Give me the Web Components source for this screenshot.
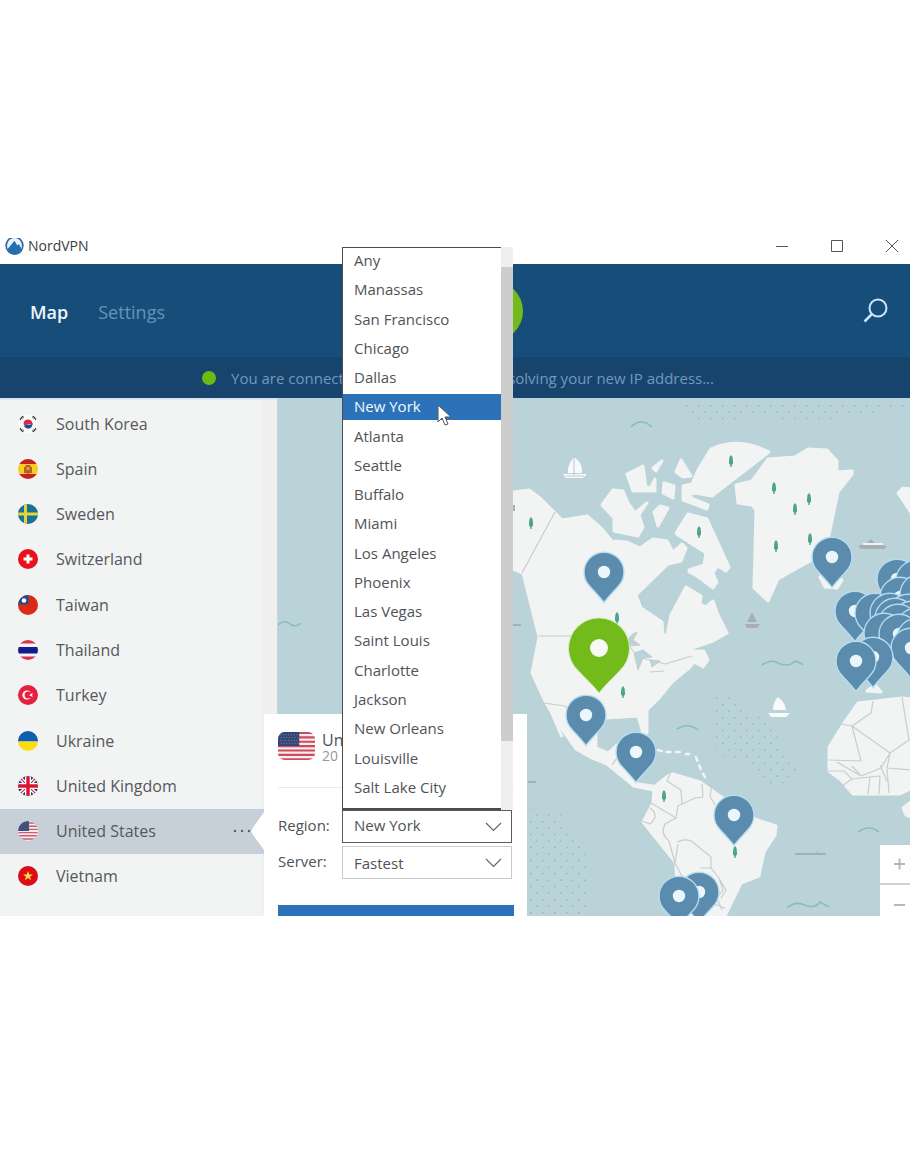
<!DOCTYPE html>
<html lang="en">
<head>
<meta charset="utf-8">
<meta name="viewport" content="width=device-width, initial-scale=1">
<title>NordVPN</title>
<style>
  body { margin: 0; padding-top: 238px; background: #fff; color: #505357; font: 16px/24px "Open Sans", "Noto Sans", sans-serif; }
</style>
</head>
<body>
<vpn-window>
  <title-bar slot="title">NordVPN</title-bar>
  <app-header slot="header"></app-header>
  <status-bar slot="status"><span>You are connect</span><span slot="next">solving your new IP address...</span></status-bar>
  <country-list slot="side">
    <country-item flag="kr">South Korea</country-item>
    <country-item flag="es">Spain</country-item>
    <country-item flag="se">Sweden</country-item>
    <country-item flag="ch">Switzerland</country-item>
    <country-item flag="tw">Taiwan</country-item>
    <country-item flag="th">Thailand</country-item>
    <country-item flag="tr">Turkey</country-item>
    <country-item flag="ua">Ukraine</country-item>
    <country-item flag="gb">United Kingdom</country-item>
    <country-item flag="us" selected>United States</country-item>
    <country-item flag="vn">Vietnam</country-item>
  </country-list>
  <world-map slot="map"></world-map>
  <server-card slot="card"></server-card>
</vpn-window>

<script>
function define(name, html, setup) {
  const template = document.createElement('template');
  template.innerHTML = html;
  customElements.define(name, class extends HTMLElement {
    constructor() {
      super();
      this.attachShadow({ mode: 'open' }).append(template.content.cloneNode(true));
    }
    connectedCallback() { if (setup) setup(this, this.shadowRoot); }
  });
}

/* The window's visible part ends with the map; the card runs on below it. */
define('vpn-window', `
<style>
  :host { display: block; position: relative; overflow: hidden; background: #fff; }
  .body { position: relative; display: grid; grid-template-columns: 278px 1fr; min-height: 518px; }
  .card { position: absolute; left: 264px; top: 316px; width: 263px; }
</style>
<slot name="title"></slot>
<slot name="header"></slot>
<slot name="status"></slot>
<div class="body">
  <slot name="side"></slot>
  <slot name="map"></slot>
  <div class="card"><slot name="card"></slot></div>
</div>`);

define('title-bar', `
<style>
  :host { display: flex; align-items: center; height: 26px; padding: 0 11px 10px 5px; font-size: 14px; line-height: 18px; color: #3c3c3c; box-sizing: border-box; }
  .logo { width: 19px; height: 20px; margin-right: 4px; }
  .name { flex: 1; }
  .tools { display: flex; gap: 40px; }
  button { border: 0; padding: 0; background: none; display: block; width: 15px; height: 15px; }
  svg { display: block; }
</style>
<svg class="logo" viewBox="0 0 19 20"><circle cx="9.500" cy="9.500" r="9.200" fill="#356ba6"/><path d="M2.500 13C1 7 4 2 9.500 2S18 7 16.500 13l-3-5-1.500 2-2.500-5z" fill="#e8f2fb"/><path d="M2.500 15 9.500 5l3 5 1.500-1.500 3 6C15 20 5 20 2.500 15z" fill="#246fb3"/></svg>
<span class="name"><slot></slot></span>
<div class="tools">
  <button aria-label="Minimize"><svg width="15" height="15" fill="none" stroke="#555"><path d="M2 7.500h12"/></svg></button>
  <button aria-label="Maximize"><svg width="15" height="15" fill="none" stroke="#555"><path d="M2.500 1.500h11v11h-11z"/></svg></button>
  <button aria-label="Close"><svg width="15" height="15" fill="none" stroke="#555"><path d="m2 1 12 12M14 1 2 13"/></svg></button>
</div>`);

define('app-header', `
<style>
  :host { display: grid; grid-template-columns: 1fr auto 1fr; align-items: center; height: 93px; padding: 0 21px 0 30px; background: #174e79; font-size: 18px; line-height: 24px; }
  nav { display: flex; gap: 30px; padding-top: 2px; }
  a { color: #6593ba; text-decoration: none; }
  a[aria-current] { color: #eef6fd; font-weight: 600; }
  .power { width: 134px; height: 60px; border: 0; border-radius: 30px; background: #73ba1b; margin-left: -8px; }
  .search { justify-self: end; border: 0; padding: 0; background: none; width: 26px; height: 28px; }
  svg { display: block; }
</style>
<nav><a href="#map" aria-current="page">Map</a><a href="#settings">Settings</a></nav>
<button class="power" aria-label="Connection"></button>
<button class="search" aria-label="Search"><svg width="26" height="28" fill="none" stroke="#cbe4fb" stroke-width="2"><circle cx="15" cy="11" r="8.500"/><path d="m9 17-7.500 7.500" stroke-width="2.500"/></svg></button>`);

define('status-bar', `
<style>
  :host { display: flex; align-items: center; justify-content: center; gap: 15px; height: 41px; padding-left: 6px; background: #17446d; color: #7299bb; font-size: 15px; line-height: 22px; box-sizing: border-box; }
  .dot { width: 14px; height: 14px; border-radius: 50%; background: #6cbb13; }
  .text { display: flex; justify-content: space-between; width: 483px; padding-top: 1px; }
</style>
<span class="dot"></span>
<span class="text"><slot></slot><slot name="next"></slot></span>`);

define('country-list', `
<style>
  :host { display: flex; flex-direction: column; justify-content: space-between; background: #f2f3f3; border-top: 2px solid #dbe4f0; padding: 1px 0 17px; box-sizing: border-box; box-shadow: inset -14px 0 #efefef; border-right: 1px solid #c9d3d8; }
</style><slot></slot>`);

define('country-item', `
<style>
  :host { display: block; width: 264px; }
  a { position: relative; display: flex; align-items: center; height: 45px; padding: 0 13px 0 18px; gap: 18px; color: #55585b; text-decoration: none; box-sizing: border-box; }
  .name { flex: 1; }
  .more { display: none; width: 18px; height: 4px; }
  :host([selected]) a { background: #c7d0d9; }
  :host([selected]) .more { display: block; }
  :host([selected]) a::after { content: ""; position: absolute; right: 0; top: 0; width: 13px; height: 45px; background: #fff; clip-path: polygon(100% 8%, 100% 92%, 30% 64%, 0 50%, 30% 36%); }
</style>
<a href="#country"><flag-icon></flag-icon><span class="name"><slot></slot></span>
<svg class="more" viewBox="0 0 18 4" fill="#5b6168"><circle cx="2" cy="2" r="1.200"/><circle cx="9" cy="2" r="1.200"/><circle cx="16" cy="2" r="1.200"/></svg></a>`,
(host, root) => root.querySelector('flag-icon').setAttribute('code', host.getAttribute('flag')));

const usStripes = '<path fill="#f3eef1" d="M0 0h40v30H0z"/><path stroke="#cf4a5c" stroke-width="2.300" d="M0 1h40M0 5.700h40M0 10.400h40M0 15.100h40M0 19.800h40M0 24.500h40M0 29.200h40"/>';
const flags = {
  kr: '<path fill="#fafafa" d="M0 0h20v20H0z"/><path d="M6 7.500A4.800 4.800 0 0 1 14.500 9C13 13 10 8 8 11 6 12 5 10 6 7.500z" fill="#d32b42"/><path d="M5.500 11C7 13 8 9.500 10 10.500S13.500 11 14.500 9C15.500 15 8 17 5.500 11z" fill="#244b98"/><path d="m1.500 5 3.500-3M1.500 15l3.500 3M15 2l3.500 3M15 18l3.500-3" stroke="#333" stroke-width="3" stroke-dasharray="1.300 .4"/>',
  es: '<path fill="#f7ce21" d="M0 0h20v20H0z"/><path fill="#c42127" d="M0 0h20v5H0zm0 15h20v5H0z"/><path fill="#b9602a" d="M6 8h1.500V6h5v2H14v6h-2l-2 1-2-1H6z"/><path d="M8.500 8h3v3h-3z" fill="#dd9a48"/>',
  se: '<path fill="#187298" d="M0 0h20v20H0z"/><path fill="#e7d33a" d="M6 0h3v20H6z"/><path fill="#e7d33a" d="M0 8.500h20v3H0z"/>',
  ch: '<path fill="#ea111c" d="M0 0h20v20H0z"/><path fill="#fff" d="M8.500 5.500h3v3h3v3h-3v3h-3v-3h-3v-3h3z"/>',
  tw: '<path fill="#dd2a17" d="M0 0h20v20H0z"/><path fill="#234a93" d="M0 0h10.500v9.500H0z"/><circle cx="6" cy="5.500" r="2.300" fill="#fff"/>',
  th: '<path fill="#f5f3f5" d="M0 0h20v20H0z"/><path fill="#d53449" d="M0 0h20v3.500H0zm0 16.500h20V20H0z"/><path fill="#131c8e" d="M0 7h20v6.500H0z"/>',
  tr: '<path fill="#e4213f" d="M0 0h20v20H0z"/><circle cx="9" cy="10" r="4.600" fill="#fff"/><circle cx="10.200" cy="10" r="3.600" fill="#e4213f"/><path fill="#fff" d="m11 10 4-2-1 2 1 2z"/>',
  ua: '<path fill="#0d5eae" d="M0 0h20v10.500H0z"/><path fill="#fbdd14" d="M0 10.500h20V20H0z"/>',
  gb: '<path fill="#26337c" d="M0 0h20v20H0z"/><path stroke="#fff" stroke-width="4" d="m0 0 20 20M20 0 0 20"/><path stroke="#d8243c" stroke-width="1.200" d="m0 0 20 20M20 0 0 20"/><path stroke="#fff" stroke-width="6" d="M10 0v20M0 10h20"/><path stroke="#d8142f" stroke-width="3.400" d="M10 0v20M0 10h20"/>',
  us: '<path fill="#f1eef1" d="M0 0h20v20H0z"/><path stroke="#cf5b6b" stroke-width="1.400" d="M0 2h20M0 5.200h20M0 8.400h20M0 11.600h20M0 14.800h20M0 18h20"/><path fill="#43507f" d="M0 0h11v10H0z"/>',
  vn: '<path fill="#dd0d17" d="M0 0h20v20H0z"/><path fill="#fddc3f" d="m10 5 1.300 3.500H15l-3 2.200 1.200 3.600-3.200-2.200-3.200 2.200L8 10.700 5 8.500h3.700z"/>'
};
customElements.define('flag-icon', class extends HTMLElement {
  static observedAttributes = ['code'];
  constructor() { super(); this.attachShadow({ mode: 'open' }); }
  attributeChangedCallback(n, o, code) {
    this.shadowRoot.innerHTML = `<style>:host { display: block; width: 20px; height: 20px; border-radius: 50%; overflow: hidden; } svg { display: block; }</style><svg width="20" height="20" viewBox="0 0 20 20">${flags[code]}</svg>`;
  }
});

/* Pins are listed back to front, as x and y of the head's centre; a third value of 0 leaves the hole out. */
const pins = [[604,572],[586,715],[636,752],[832,557],[734,815],[699,892],[679,896],
  [897,579],[916,580,0],[900,597],[920,594,0],[855,611],[875,613,0],[890,613,0],[908,614,0],[895,618,0],[912,621,0],[898,624,0],[916,628,0],[884,633,0],[899,634],[917,638,0],[911,648],[873,657],[856,661]];
const trees = [[531,523],[731,461],[699,532],[774,488],[809,499],[795,509],[776,546],[810,539],[623,692],[617,618],[664,796],[735,852]];
define('world-map', `
<style>
  :host { display: block; position: relative; background: #bad3d9; }
  svg { position: absolute; inset: 0; width: 100%; height: 100%; display: block; }
  .zoom { position: absolute; right: 0; bottom: 0; width: 30px; display: grid; gap: 2px; background: #ccd2d5; }
  button { border: 0; padding: 0 0 0 8px; height: 38px; background: #fff; color: #b4b8ba; }
  button:last-child { height: 31px; padding-top: 8px; }
  .zoom svg { position: static; width: 22px; height: 24px; }
</style>
<svg viewBox="278 398 632 518" preserveAspectRatio="xMinYMin slice" role="img" aria-label="World map">
  <defs>
    <pattern id="dots" x="0" y="0" width="12" height="13" patternUnits="userSpaceOnUse"><path d="M2 2h1.500v1.200H2zM8 8.500h1.500v1.200H8z" fill="#8db4be"/></pattern>
    <path id="pin" d="M0 30.500C-4 25-9 20-14 14.500A20 20 0 1 1 14 14.500C9 20 4 25 0 30.500Z"/>
    <path id="tree" d="M-1.500-4 0-6 1.500-4 2 0 2 2.500 .7 4V6H-.7V4L-2 2.500V0Z"/>
  </defs>
  <path fill="url(#dots)" d="M682 402H910V410L860 414 840 419H780L760 414 740 420H692ZM712 690 735 700 770 725 800 775 775 788 750 765 717 755ZM528 808 560 814 585 850 590 916H528Z"/>
  <g fill="#f2f3f3" stroke="#f2f3f3" stroke-width="3" stroke-linejoin="round">
    <path d="M500 496 513 492 529 490 540 498 555 513 562 520 587 516 600 527 612 541 627 542 640 548 653 539 667 541 673 552 682 544 686 548 681 561 668 564 636 595 641 608 662 622 663 635H667L671 615 686 587 701 596 700 604 706 607 713 601 718 615 727 633 713 641 695 647 687 651 704 651 708 660 703 667 694 662 689 668 672 682 659 698 647 710V733H643L638 716 606 718 596 730V748L608 753 617 745 626 751 623 768 638 784 653 786 653 790 634 786 607 764 590 757 576 749 561 728 546 703 532 673 539 637 523 573 513 569 500 560Z"/>
    <path d="M551 711 562 737"/>
    <path d="M683 486 692 484 698 470 711 449Q735 438 760 448L769 452 712 496 695 493Q687 494 693 499L708 505 707 509 683 500Z"/>
    <path d="M627 474 643 466 646 488 651 487 655 479V491L633 491ZM653 468 662 461 656 471ZM681 460 691 476 683 477 676 472ZM664 483 674 486 673 498 663 493ZM602 505 613 490 623 491 628 503 635 513 647 503 639 515 643 527 638 536 614 531V518ZM654 512 660 506 668 508 658 526Z"/>
    <path d="M676 533 688 514 707 519 729 567 726 571 717 566 713 573 717 582 713 588 697 576 689 572V570L704 565 706 553 678 535Z"/>
    <path d="M736 485 752 481 768 459 795 457 808 449 827 450 837 461V472L852 471V474L838 492 829 535 825 554 810 561 778 579 768 601 754 588 756 510 752 505 738 503Z"/>
    <path d="M898 493 903 488 912 489V514ZM820 577 828 571 842 580 837 588 825 587Z"/>
    <path d="M654 787 668 776 673 774 700 782 720 796 755 819 776 826 775 835 764 852 759 876 741 883 724 918H678L676 863 643 822 653 803Z"/>
    <path d="M858 703 902 698 912 699V788L900 794H853L841 780 829 771V747L846 720ZM867 691 875 685 881 692ZM903 808 912 801V817L906 815Z"/>
  </g>
  <path d="M658 750 665 752H680M686 754H689M696 757 701 770 706 779" fill="none" stroke="#f2f3f3" stroke-width="2.500" stroke-dasharray="4 5" stroke-linecap="round"/>
  <g fill="none" stroke="#c9cdce" stroke-width="1.200" stroke-linejoin="round">
    <path d="M555 512 522 573M538 636H572M544 703 565 706 574 718M630 647 638 657 665 664 692 656M612 765 617 758"/>
    <path d="M670 774 667 781 681 790 682 804 695 798 703 797 702 784M682 804 678 806 676 818 651 803M676 818 665 824Q660 834 669 841L675 863M677 842Q688 837 695 844L711 857V868L719 878 723 890 717 898 722 910M650 808Q660 815 650 824L642 821M700 868H711M712 785 710 796 715 805M678 844 675 863 684 880M720 880 726 890 721 898M711 903 725 908"/>
    <path d="M873 701 871 713 852 726 840 724M852 726 861 761 829 760M852 726 890 753 881 768 861 776 837 762M902 697 909 740 890 753M890 753 887 768 912 770M909 740 912 736M828 771H844L852 779 842 786M852 779 870 777 868 794M870 777 880 776 879 794M880 765 887 781M887 769 889 793M861 776 852 766"/>
  </g>
  <path fill="#bad3d9" stroke="#c7cccd" d="M626 646Q628 635 637 632L633 640 640 645ZM634 653 643 650 652 657 643 658 638 670ZM650 660 660 661 652 667ZM650 672 664 671"/>
  <g fill="none" stroke="#86bdc2" stroke-width="1.600"><path d="M631 427Q641 417 652 427M762 665Q772 658 780 664 790 667 795 661 801 663 803 665M677 729Q688 722 698 730M858 832Q869 824 879 832M787 908Q796 900 807 906 816 908 820 902L829 907M278 625Q284 619 290 624 296 628 301 623"/></g>
  <g fill="#f7f9fa"><path d="M574 457Q567 465 568 473H582Q583 463 574 457ZM563 474H587L583 478H566ZM778 697Q773 702 773 710H786Q785 702 778 697ZM768 713H790L786 717H771Z"/></g>
  <path d="M574 455V475M566 476H584" stroke="#b9bec0" stroke-width=".8"/>
  <g fill="#a8afb2"><path d="M752 612 747 622H757ZM745 624H760L757 628H747ZM858 546 867 543 871 539 876 544 887 546 884 549H861ZM795 853H816L820 847 817 853H826V855H795ZM528 781H536V783H528ZM513 624H521V626H513ZM512 505H515V511H512Z"/></g>
  <path d="M863 544H883" stroke="#eef2f3" stroke-width="2"/>
  <g fill="#4da38f">${trees.map(([x, y]) => `<use href="#tree" x="${x}" y="${y}"/>`).join('')}</g>
  ${pins.map(([x, y, hole = 1]) => `<g transform="translate(${x} ${y})"><use href="#pin" fill="#5b8cae" stroke="#b5ddf2" stroke-width="1.400"/>${hole ? '<circle r="6.200" fill="#eaf6fd"/>' : ''}</g>`).join('')}
  <g transform="translate(599 648)"><path d="M0 45C-6 37-13 31-21 22.500A30.500 30.500 0 1 1 21 22.500C13 31 6 37 0 45Z" fill="#73ba1b" stroke="#d5ecc0"/><circle r="9" fill="#f6faf2"/></g>
</svg>
<div class="zoom">
  <button aria-label="Zoom in"><svg viewBox="0 0 22 24" fill="none" stroke="currentColor" stroke-width="2"><path d="M6 12h11M11.500 6.500v11"/></svg></button>
  <button aria-label="Zoom out"><svg viewBox="0 0 22 24" fill="none" stroke="currentColor" stroke-width="2"><path d="M6 12h11"/></svg></button>
</div>`);

define('region-menu', `
<style>
  :host { display: grid; grid-template-columns: 1fr 12px; height: 563px; background: #fff; color: #505357; font-size: 15px; line-height: 24px; box-sizing: border-box; }
  ul { display: flex; flex-direction: column; justify-content: space-between; margin: 0; padding: 0 0 7px; list-style: none; border: solid #4c4c4c; border-width: 1px 0 2px 1px; }
  li { padding: 0 0 2px 11px; }
  li[aria-selected] { background: #2c72b8; color: #f4f9ff; }
  .track { background: #efefef; padding: 20px 0 69px; display: grid; }
  .thumb { background: #cccdcd; }
  .cursor { position: absolute; left: 95px; top: 157px; width: 16px; height: 24px; }
</style>
<ul role="listbox" aria-label="Region"></ul>
<div class="track"><div class="thumb"></div></div>
<svg class="cursor" viewBox="0 0 16 24"><path d="M1 1v17l4-4 3 7 3-1-3-7h6z" fill="#fff" stroke="#555"/></svg>`,
(host, root) => {
  const names = ['Any','Manassas','San Francisco','Chicago','Dallas','New York','Atlanta','Seattle','Buffalo','Miami','Los Angeles','Phoenix','Las Vegas','Saint Louis','Charlotte','Jackson','New Orleans','Louisville','Salt Lake City'];
  root.querySelector('ul').innerHTML = names.map(n => `<li role="option"${n === 'New York' ? ' aria-selected="true"' : ''}>${n}</li>`).join('');
});

define('server-card', `
<style>
  :host { display: block; background: #fff; padding: 17px 13px 20px 14px; font-size: 15px; line-height: 22px; }
  header { display: flex; gap: 7px; padding-bottom: 24px; margin-bottom: 22px; border-bottom: 1px solid #e8eaeb; }
  .flag { display: block; width: 37px; height: 28px; margin-top: 1px; border-radius: 7px; overflow: hidden; }
  h2, p { margin: 0; font-weight: 400; white-space: nowrap; }
  h2 { font-size: 16px; line-height: 18px; }
  p { font-size: 14px; line-height: 14px; color: #94989b; }
  .field { display: grid; grid-template-columns: 64px 170px; align-items: center; margin-bottom: 3px; }
  label { margin-top: -3px; }
  .pick { position: relative; display: grid; align-items: center; }
  select { appearance: none; width: 100%; height: 33px; padding: 0 28px 0 11px; border: 1px solid #c9cccf; border-radius: 0; background: #fff; color: inherit; font: inherit; outline: 0; }
  #region { border-color: #5b5b5b; padding-bottom: 4px; }
  .chev { position: absolute; right: 10px; width: 17px; height: 10px; pointer-events: none; }
  region-menu { position: absolute; left: 0; bottom: 33px; width: 171px; z-index: 2; }
  .connect { display: block; width: 236px; height: 40px; margin-top: 26px; border: 0; background: #2c72b8; }
</style>
<header>
  <svg class="flag" viewBox="0 0 40 30" preserveAspectRatio="none">${usStripes}<path fill="#354675" d="M0 0h23v15H0z"/><path d="M2 3h20M3 6h19M2 9h20M3 12h19" stroke="#8791b5" stroke-dasharray="1 2"/></svg>
  <div><h2>Un</h2><p>20</p></div>
</header>
<div class="field"><label for="region">Region:</label><div class="pick">
  <select id="region"><option>New York</option><option>Any</option></select>
  <svg class="chev" viewBox="0 0 17 10" fill="none" stroke="#666" stroke-width="1.200"><path d="m1 1 7.500 7.500L16 1"/></svg>
  <region-menu></region-menu></div></div>
<div class="field"><label for="server">Server:</label><div class="pick">
  <select id="server"><option>Fastest</option></select>
  <svg class="chev" viewBox="0 0 17 10" fill="none" stroke="#666" stroke-width="1.200"><path d="m1 1 7.500 7.500L16 1"/></svg></div></div>
<button class="connect" aria-label="Connect"></button>`);
</script>
</body>
</html>
